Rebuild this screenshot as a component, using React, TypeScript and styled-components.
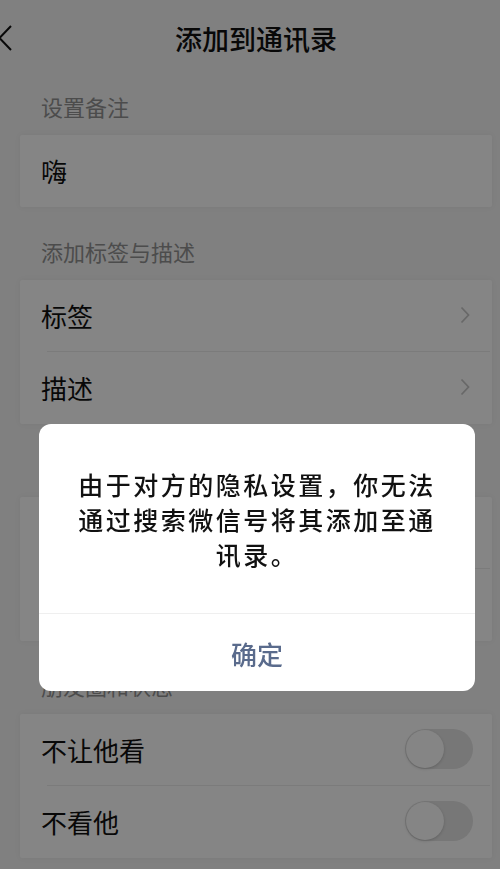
import styled, { createGlobalStyle } from "styled-components";

const GlobalStyle = createGlobalStyle`
  html, body {
    margin: 0;
    padding: 0;
    background: #f5f5f5;
    overflow: hidden;
  }
  body {
    font-family: "Noto Sans CJK SC", "Noto Sans", sans-serif;
    color: #111;
  }
`;

const Page = styled.div`
  width: 500px;
  height: 869px;
  background: #f5f5f5;
  position: relative;
  overflow: hidden;
`;

const NavBar = styled.header`
  height: 62px;
  padding-top: 14px;
  box-sizing: border-box;
  display: grid;
  grid-template-columns: 40px 1fr 28px;
  align-items: center;
`;

const BackButton = styled.div`
  margin-left: -2px;
  display: flex;
  align-items: center;
`;

const Title = styled.h1`
  margin: 0;
  text-align: center;
  font-size: 27px;
  font-weight: 500;
  line-height: 1;
  color: #111;
`;

const Content = styled.main`
  padding: 0 8px 0 20px;
`;

const SectionHeader = styled.div`
  height: 73px;
  box-sizing: border-box;
  display: flex;
  align-items: flex-end;
  padding: 0 0 18px 21px;
  font-size: 22px;
  line-height: 22px;
  color: #929292;
`;

const Card = styled.section`
  background: #ffffff;
  border-radius: 2px;
  box-shadow: 0 0 6px rgba(0, 0, 0, 0.05);
`;

const Row = styled.div<{ $divider?: boolean }>`
  height: 72px;
  display: flex;
  align-items: center;
  justify-content: space-between;
  padding: 0 19px 2px 21px;
  box-sizing: border-box;
  position: relative;
  font-size: 26px;
  color: #111;

  ${({ $divider }) =>
    $divider &&
    `
    &::after {
      content: "";
      position: absolute;
      left: 27px;
      right: 2px;
      bottom: 0;
      height: 1px;
      background: #ececec;
    }
  `}
`;

const Chevron = styled.svg`
  margin-right: 3px;
`;

const Switch = styled.div`
  width: 68px;
  height: 40px;
  border-radius: 20px;
  background: #e4e4e4;
  display: flex;
  align-items: center;
  padding: 1px;
  box-sizing: border-box;
`;

const Knob = styled.div`
  width: 38px;
  height: 38px;
  border-radius: 50%;
  background: #ffffff;
  box-shadow: 0 1px 3px rgba(0, 0, 0, 0.18);
`;

const Overlay = styled.div`
  position: fixed;
  inset: 0;
  background: rgba(0, 0, 0, 0.48);
  display: flex;
  align-items: flex-start;
  padding: 424px 0 0 39px;
  box-sizing: border-box;
`;

const Dialog = styled.div`
  width: 436px;
  background: #ffffff;
  border-radius: 12px;
  overflow: hidden;
`;

const Message = styled.p`
  margin: 0;
  padding: 43px 36px 41px;
  text-align: center;
  font-size: 25px;
  font-weight: 500;
  line-height: 35px;
  letter-spacing: 2.5px;
  color: #111;
  border-bottom: 1px solid #efefef;
`;

const ConfirmButton = styled.div`
  height: 77px;
  display: flex;
  align-items: center;
  justify-content: center;
  font-size: 26px;
  font-weight: 500;
  color: #5a6b8c;
  padding-top: 2px;
  box-sizing: border-box;
`;

const ChevronIcon = () => (
  <Chevron width="10" height="18" viewBox="0 0 10 18">
    <path d="M1.5 1.5 L8.5 9 L1.5 16.5" fill="none" stroke="#c8c8c8" strokeWidth="1.8" />
  </Chevron>
);

const Toggle = () => (
  <Switch>
    <Knob />
  </Switch>
);

export default function App() {
  return (
    <Page>
      <GlobalStyle />
      <NavBar>
        <BackButton>
          <svg width="14" height="28" viewBox="0 0 14 28">
            <path d="M13 2 L1.5 14 L13 26" fill="none" stroke="#111" strokeWidth="2" />
          </svg>
        </BackButton>
        <Title>添加到通讯录</Title>
        <div />
      </NavBar>
      <Content>
        <SectionHeader>设置备注</SectionHeader>
        <Card>
          <Row>嗨</Row>
        </Card>

        <SectionHeader>添加标签与描述</SectionHeader>
        <Card>
          <Row $divider>
            标签
            <ChevronIcon />
          </Row>
          <Row>
            描述
            <ChevronIcon />
          </Row>
        </Card>

        {/* this group sits fully under the dialog */}
        <SectionHeader />
        <Card>
          <Row $divider />
          <Row />
        </Card>

        <SectionHeader>朋友圈和状态</SectionHeader>
        <Card>
          <Row $divider>
            不让他看
            <Toggle />
          </Row>
          <Row>
            不看他
            <Toggle />
          </Row>
        </Card>
      </Content>

      <Overlay>
        <Dialog>
          <Message>由于对方的隐私设置，你无法通过搜索微信号将其添加至通讯录。</Message>
          <ConfirmButton>确定</ConfirmButton>
        </Dialog>
      </Overlay>
    </Page>
  );
}
